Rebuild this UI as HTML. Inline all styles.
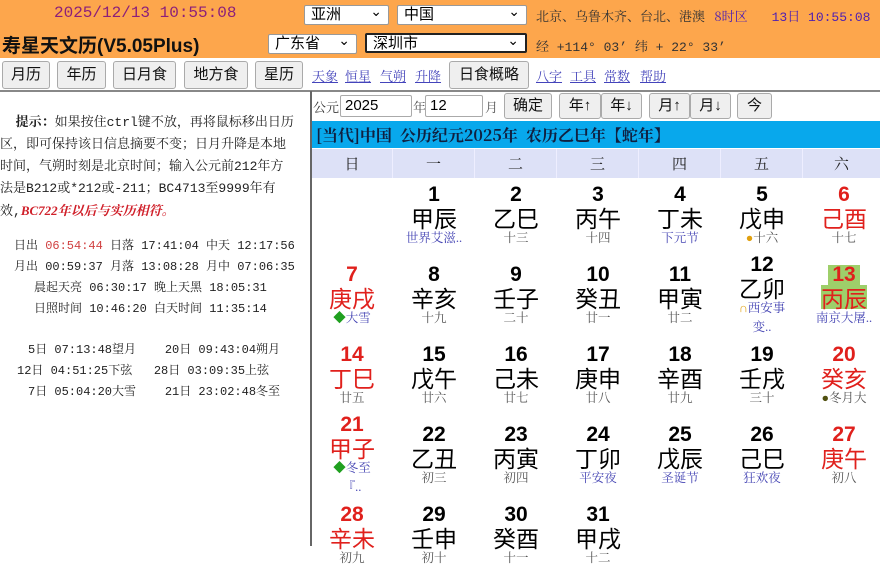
<!DOCTYPE html>
<html><head><meta charset="utf-8"><style>
*{margin:0;padding:0;box-sizing:border-box}
body{width:880px;height:546px;overflow:hidden;background:#fff;position:relative;font-family:"Liberation Mono","Noto Serif CJK SC",monospace;}
.a{position:absolute;white-space:nowrap}
.sans{font-family:"Liberation Sans","Noto Sans CJK SC",sans-serif}
.top{position:absolute;left:0;top:0;width:880px;height:58px;background:#fda64c}
.sel{position:absolute;background:#fff;border:1px solid #999;border-radius:2px;font:15px "Liberation Sans","Noto Sans CJK SC",sans-serif;padding-left:6px;line-height:18px;height:20px}
.sel:after{content:"⌄";position:absolute;right:6px;top:-4px;font-size:14px}
.btn{position:absolute;background:#efefef;border:1px solid #aaa;border-radius:3px;font:15px "Liberation Sans","Noto Sans CJK SC",sans-serif;text-align:center;line-height:26px;height:28px;color:#111}
.lk{position:absolute;color:#44b;text-decoration:underline;font-size:13px;font-family:"Noto Serif CJK SC",serif}
.inp{position:absolute;background:#fff;border:1px solid #aaa;border-radius:2px;font:15px "Liberation Sans",sans-serif;padding-left:4px;line-height:20px;height:22px}
.cell{position:absolute;width:82px;height:80px;display:flex;flex-direction:column;align-items:center;justify-content:center;text-align:center}
.n{font:bold 21px/20px "Liberation Sans",sans-serif}
.g{font:23px/24px "Noto Sans CJK SC",sans-serif}
.s{font:12.5px/19px "Liberation Serif","Noto Serif CJK SC",serif;color:#555}
.r{color:#e0201c}
.b{color:#4646b4}
.p{font-size:12px;line-height:21px;color:#222}
</style></head><body>
<div class="top"></div>
<div class="a" style="left:54px;top:4px;font-size:16px;color:#8c1f7a">2025/12/13 10:55:08</div>
<div class="a sans" style="left:2px;top:31px;font-size:19px;font-weight:bold;color:#111">寿星天文历(V5.05Plus)</div>
<div class="sel" style="left:304px;top:5px;width:85px">亚洲</div>
<div class="sel" style="left:397px;top:5px;width:130px">中国</div>
<div class="sel" style="left:268px;top:34px;width:89px">广东省</div>
<div class="sel" style="left:365px;top:33px;width:162px;border:2px solid #222">深圳市</div>
<div class="a" style="left:536px;top:6px;font-size:13px;color:#333;font-family:'Noto Serif CJK SC',serif">北京、乌鲁木齐、台北、港澳 <span style="color:#5020b0;margin-left:6px">8时区</span><span style="color:#5020b0;margin-left:24px;font-family:'Liberation Mono','Noto Serif CJK SC',monospace">13日 10:55:08</span></div>
<div class="a" style="left:536px;top:36px;font-size:13px;color:#333">经 +114° 03’ 纬 + 22° 33’</div>

<div class="btn" style="left:2px;top:61px;width:48px">月历</div>
<div class="btn" style="left:57px;top:61px;width:49px">年历</div>
<div class="btn" style="left:113px;top:61px;width:63px">日月食</div>
<div class="btn" style="left:184px;top:61px;width:64px">地方食</div>
<div class="btn" style="left:255px;top:61px;width:48px">星历</div>
<div class="lk" style="left:312px;top:66px">天象</div>
<div class="lk" style="left:345px;top:66px">恒星</div>
<div class="lk" style="left:380px;top:66px">气朔</div>
<div class="lk" style="left:415px;top:66px">升降</div>
<div class="btn" style="left:449px;top:61px;width:80px">日食概略</div>
<div class="lk" style="left:536px;top:66px">八字</div>
<div class="lk" style="left:570px;top:66px">工具</div>
<div class="lk" style="left:604px;top:66px">常数</div>
<div class="lk" style="left:640px;top:66px">帮助</div>
<div class="a" style="left:0;top:90px;width:880px;height:2px;background:#888"></div>
<div class="a" style="left:310px;top:91px;width:2px;height:455px;background:#666"></div>

<div class="a" style="left:0;top:110px;font-size:13px;line-height:22px;color:#222">&nbsp;&nbsp;<b style="font-family:'Noto Serif CJK SC',serif">提示：</b>如果按住ctrl键不放，再将鼠标移出日历<br>区，即可保持该日信息摘要不变；日月升降是本地<br>时间，气朔时刻是北京时间；输入公元前212年方<br>法是B212或*212或-211；BC4713至9999年有<br>效,<b><i style="color:#d0202a;font-family:'Liberation Serif','Noto Serif CJK SC',serif">BC722年以后与实历相符。</i></b></div>
<div class="a p" style="left:14px;top:236px">日出 <span style="color:#d04040">06:54:44</span> 日落 17:41:04 中天 12:17:56</div>
<div class="a p" style="left:14px;top:257px">月出 00:59:37 月落 13:08:28 月中 07:06:35</div>
<div class="a p" style="left:34px;top:278px">晨起天亮 06:30:17 晚上天黑 18:05:31</div>
<div class="a p" style="left:34px;top:299px">日照时间 10:46:20 白天时间 11:35:14</div>
<div class="a p" style="left:28px;top:340px">5日 07:13:48望月&nbsp;&nbsp;&nbsp;&nbsp;20日 09:43:04朔月</div>
<div class="a p" style="left:17px;top:361px">12日 04:51:25下弦&nbsp;&nbsp;&nbsp;28日 03:09:35上弦</div>
<div class="a p" style="left:28px;top:382px">7日 05:04:20大雪&nbsp;&nbsp;&nbsp;&nbsp;21日 23:02:48冬至</div>

<div class="a" style="left:313px;top:97px;font-size:13px;color:#333;font-family:'Noto Serif CJK SC',serif">公元</div>
<div class="inp" style="left:340px;top:95px;width:72px">2025</div>
<div class="a" style="left:413px;top:97px;font-size:13px;color:#555;font-family:'Noto Serif CJK SC',serif">年</div>
<div class="inp" style="left:425px;top:95px;width:58px">12</div>
<div class="a" style="left:485px;top:97px;font-size:13px;color:#555;font-family:'Noto Serif CJK SC',serif">月</div>
<div class="btn" style="left:504px;top:93px;width:48px;height:26px;line-height:24px">确定</div>
<div class="btn" style="left:559px;top:93px;width:42px;height:26px;line-height:24px">年↑</div>
<div class="btn" style="left:601px;top:93px;width:41px;height:26px;line-height:24px">年↓</div>
<div class="btn" style="left:649px;top:93px;width:41px;height:26px;line-height:24px">月↑</div>
<div class="btn" style="left:690px;top:93px;width:41px;height:26px;line-height:24px">月↓</div>
<div class="btn" style="left:737px;top:93px;width:35px;height:26px;line-height:24px">今</div>

<div class="a" style="left:312px;top:121px;width:568px;height:27px;background:#08a8ec"></div>
<div class="a" style="left:316px;top:123px;font-size:16px;color:#102040;font-weight:bold;font-family:'Noto Serif CJK SC',serif">[当代]中国&nbsp;&nbsp;公历纪元2025年&nbsp;&nbsp;农历乙巳年【蛇年】</div>
<div class="a" style="left:312px;top:149px;width:568px;height:29px;background:#dde1f7"></div>
<div class="a" style="left:312px;top:149px;width:568px;height:29px;display:flex;font-size:15px;color:#222;font-family:'Noto Serif CJK SC',serif">
<div style="width:81px;text-align:center;line-height:29px;border-right:1px solid #eef">日</div><div style="width:82px;text-align:center;line-height:29px;border-right:1px solid #eef">一</div><div style="width:82px;text-align:center;line-height:29px;border-right:1px solid #eef">二</div><div style="width:82px;text-align:center;line-height:29px;border-right:1px solid #eef">三</div><div style="width:82px;text-align:center;line-height:29px;border-right:1px solid #eef">四</div><div style="width:82px;text-align:center;line-height:29px;border-right:1px solid #eef">五</div><div style="width:77px;text-align:center;line-height:29px">六</div></div>

<div class="cell" style="left:393px;top:176px"><div class="n">1</div><div class="g">甲辰</div><div class="s b">世界艾滋..</div></div>
<div class="cell" style="left:475px;top:176px"><div class="n">2</div><div class="g">乙巳</div><div class="s">十三</div></div>
<div class="cell" style="left:557px;top:176px"><div class="n">3</div><div class="g">丙午</div><div class="s">十四</div></div>
<div class="cell" style="left:639px;top:176px"><div class="n">4</div><div class="g">丁未</div><div class="s b">下元节</div></div>
<div class="cell" style="left:721px;top:176px"><div class="n">5</div><div class="g">戊申</div><div class="s"><span style="color:#e0a010">●</span>十六</div></div>
<div class="cell r" style="left:803px;top:176px"><div class="n">6</div><div class="g">己酉</div><div class="s">十七</div></div>

<div class="cell r" style="left:311px;top:256px"><div class="n">7</div><div class="g">庚戌</div><div class="s b"><span style="color:#20a020">◆</span>大雪</div></div>
<div class="cell" style="left:393px;top:256px"><div class="n">8</div><div class="g">辛亥</div><div class="s">十九</div></div>
<div class="cell" style="left:475px;top:256px"><div class="n">9</div><div class="g">壬子</div><div class="s">二十</div></div>
<div class="cell" style="left:557px;top:256px"><div class="n">10</div><div class="g">癸丑</div><div class="s">廿一</div></div>
<div class="cell" style="left:639px;top:256px"><div class="n">11</div><div class="g">甲寅</div><div class="s">廿二</div></div>
<div class="cell" style="left:721px;top:256px"><div class="n">12</div><div class="g">乙卯</div><div class="s b" style="white-space:normal;width:60px"><span style="color:#e0a010">∩</span>西安事变..</div></div>
<div class="cell r" style="left:803px;top:256px"><div class="n" style="background:#9ecf6a;padding:0 4px">13</div><div class="g" style="background:#9ecf6a">丙辰</div><div class="s b">南京大屠..</div></div>

<div class="cell r" style="left:311px;top:336px"><div class="n">14</div><div class="g">丁巳</div><div class="s">廿五</div></div>
<div class="cell" style="left:393px;top:336px"><div class="n">15</div><div class="g">戊午</div><div class="s">廿六</div></div>
<div class="cell" style="left:475px;top:336px"><div class="n">16</div><div class="g">己未</div><div class="s">廿七</div></div>
<div class="cell" style="left:557px;top:336px"><div class="n">17</div><div class="g">庚申</div><div class="s">廿八</div></div>
<div class="cell" style="left:639px;top:336px"><div class="n">18</div><div class="g">辛酉</div><div class="s">廿九</div></div>
<div class="cell" style="left:721px;top:336px"><div class="n">19</div><div class="g">壬戌</div><div class="s">三十</div></div>
<div class="cell r" style="left:803px;top:336px"><div class="n">20</div><div class="g">癸亥</div><div class="s"><span style="color:#505010">●</span>冬月大</div></div>

<div class="cell r" style="left:311px;top:416px"><div class="n">21</div><div class="g">甲子</div><div class="s b"><span style="color:#20a020">◆</span>冬至<br>『..</div></div>
<div class="cell" style="left:393px;top:416px"><div class="n">22</div><div class="g">乙丑</div><div class="s">初三</div></div>
<div class="cell" style="left:475px;top:416px"><div class="n">23</div><div class="g">丙寅</div><div class="s">初四</div></div>
<div class="cell" style="left:557px;top:416px"><div class="n">24</div><div class="g">丁卯</div><div class="s b">平安夜</div></div>
<div class="cell" style="left:639px;top:416px"><div class="n">25</div><div class="g">戊辰</div><div class="s b">圣诞节</div></div>
<div class="cell" style="left:721px;top:416px"><div class="n">26</div><div class="g">己巳</div><div class="s b">狂欢夜</div></div>
<div class="cell r" style="left:803px;top:416px"><div class="n">27</div><div class="g">庚午</div><div class="s">初八</div></div>

<div class="cell r" style="left:311px;top:496px"><div class="n">28</div><div class="g">辛未</div><div class="s">初九</div></div>
<div class="cell" style="left:393px;top:496px"><div class="n">29</div><div class="g">壬申</div><div class="s">初十</div></div>
<div class="cell" style="left:475px;top:496px"><div class="n">30</div><div class="g">癸酉</div><div class="s">十一</div></div>
<div class="cell" style="left:557px;top:496px"><div class="n">31</div><div class="g">甲戌</div><div class="s">十二</div></div>
</body></html>
